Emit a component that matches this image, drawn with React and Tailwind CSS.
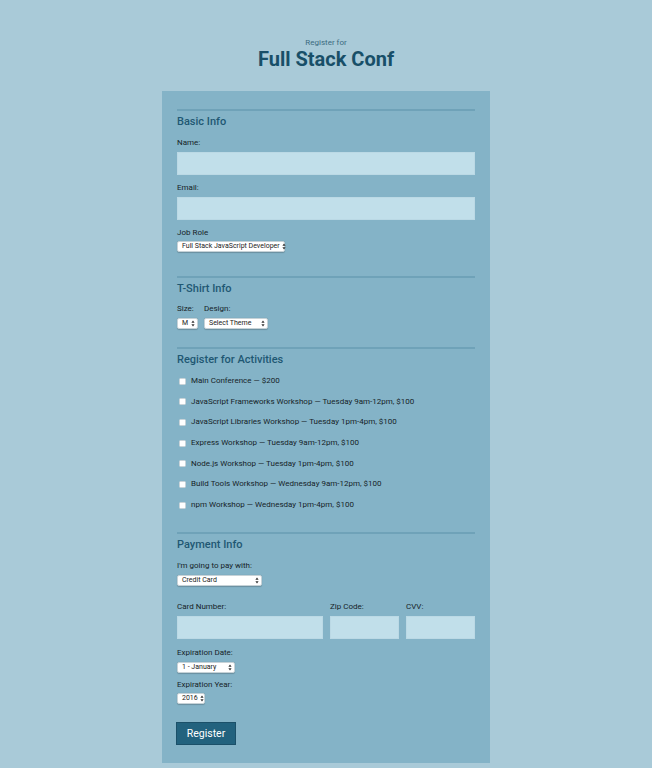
import React from 'react';

const ACTIVITIES = [
  'Main Conference — $200',
  'JavaScript Frameworks Workshop — Tuesday 9am-12pm, $100',
  'JavaScript Libraries Workshop — Tuesday 1pm-4pm, $100',
  'Express Workshop — Tuesday 9am-12pm, $100',
  'Node.js Workshop — Tuesday 1pm-4pm, $100',
  'Build Tools Workshop — Wednesday 9am-12pm, $100',
  'npm Workshop — Wednesday 1pm-4pm, $100',
];

const Label = ({ children, className = '' }) => (
  <div className={`text-[8px] leading-[10px] text-[#162328] ${className}`}>{children}</div>
);

const Heading = ({ children }) => (
  <h2 className="mt-[4px] text-[11px] leading-[13px] font-medium text-[#1f5873]">{children}</h2>
);

const Arrows = () => (
  <svg width="4" height="7" viewBox="0 0 4 7" className="shrink-0">
    <path d="M2 0.5 L3.6 2.8 L0.4 2.8 Z" fill="#333" />
    <path d="M2 6.5 L3.6 4.2 L0.4 4.2 Z" fill="#333" />
  </svg>
);

const Select = ({ value, className = '' }) => (
  <div
    className={`flex h-[11px] items-center justify-between gap-[2px] rounded-[2px] border border-[#c6d2d7] bg-white pl-[4px] pr-[2px] text-[7px] leading-none text-[#222] shadow-[0_0.5px_1px_rgba(0,0,0,0.2)] ${className}`}
  >
    <span className="whitespace-nowrap">{value}</span>
    <Arrows />
  </div>
);

const Input = ({ className = '' }) => (
  <div className={`h-[23px] bg-[#c1dfea] border border-[#bbd9e5] ${className}`} />
);

export default function App() {
  return (
    <div className="min-h-screen bg-[#a9cad8] font-['Roboto','Liberation_Sans',sans-serif] flex flex-col items-center pt-[38px] pb-[5px]">
      <div className="text-center">
        <div className="text-[8px] leading-[10px] text-[#3b6a80]">Register for</div>
        <h1 className="text-[20px] leading-[22px] font-bold text-[#184f68]">Full Stack Conf</h1>
      </div>

      <form className="mt-[21px] w-[328px] bg-[#84b3c7] px-[15px] pt-[18px] pb-[18px]">
        {/* Basic info */}
        <section className="border-t-2 border-[#6fa2b8]">
          <Heading>Basic Info</Heading>
          <Label className="mt-[10px]">Name:</Label>
          <Input className="mt-[4px]" />
          <Label className="mt-[8px]">Email:</Label>
          <Input className="mt-[4px]" />
          <Label className="mt-[8px]">Job Role</Label>
          <Select value="Full Stack JavaScript Developer" className="mt-[3px] w-[108px]" />
        </section>

        {/* T-shirt */}
        <section className="mt-[24px] border-t-2 border-[#6fa2b8]">
          <Heading>T-Shirt Info</Heading>
          <div className="mt-[9px] flex gap-[6px]">
            <div>
              <Label>Size:</Label>
              <Select value="M" className="mt-[4px] w-[21px]" />
            </div>
            <div>
              <Label>Design:</Label>
              <Select value="Select Theme" className="mt-[4px] w-[64px]" />
            </div>
          </div>
        </section>

        {/* Activities */}
        <section className="mt-[18px] border-t-2 border-[#6fa2b8]">
          <Heading>Register for Activities</Heading>
          <div className="mt-[10px] flex flex-col gap-[10.7px]">
            {ACTIVITIES.map((a) => (
              <label key={a} className="flex h-[10px] items-center gap-[5px] pl-[2px]">
                <span className="h-[7px] w-[7px] rounded-[1.5px] border border-[#c9d3d8] bg-white" />
                <span className="text-[8px] leading-[10px] text-[#162328]">{a}</span>
              </label>
            ))}
          </div>
        </section>

        {/* Payment */}
        <section className="mt-[22px] border-t-2 border-[#6fa2b8]">
          <Heading>Payment Info</Heading>
          <Label className="mt-[10px]">I'm going to pay with:</Label>
          <Select value="Credit Card" className="mt-[4px] w-[85px]" />

          <div className="mt-[16px] grid grid-cols-[146px_69px_69px] gap-x-[7px]">
            <Label>Card Number:</Label>
            <Label>Zip Code:</Label>
            <Label>CVV:</Label>
            <Input className="mt-[4px]" />
            <Input className="mt-[4px]" />
            <Input className="mt-[4px]" />
          </div>

          <Label className="mt-[9px]">Expiration Date:</Label>
          <Select value="1 - January" className="mt-[4px] w-[58px]" />
          <Label className="mt-[7px]">Expiration Year:</Label>
          <Select value="2016" className="mt-[3px] w-[28px]" />

          <button
            type="button"
            className="mt-[18px] -ml-[1px] h-[23px] w-[60px] border border-[#1b5069] bg-[#22627e] text-[10.5px] text-white"
          >
            Register
          </button>
        </section>
      </form>
    </div>
  );
}
